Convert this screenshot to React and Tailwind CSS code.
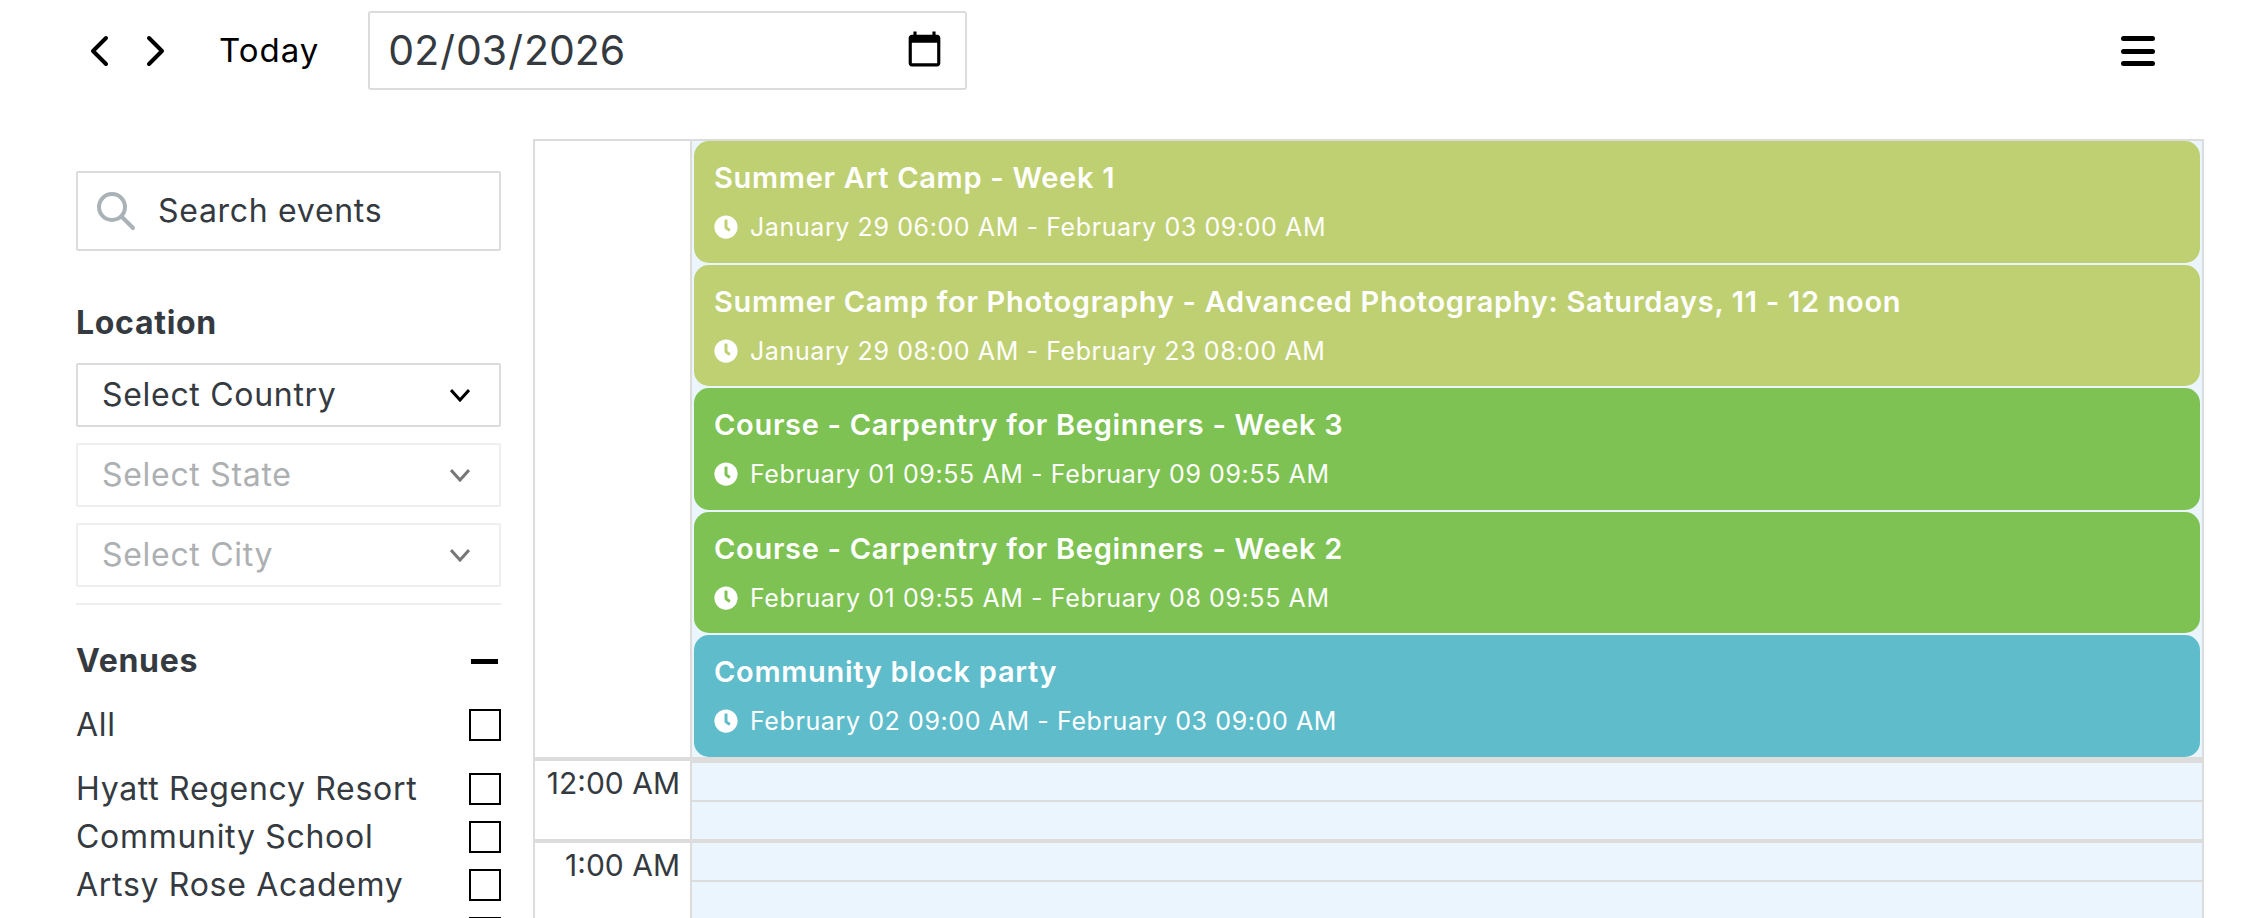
import React from "react";
import { FaClock } from "react-icons/fa";

const events = [
  { title: "Summer Art Camp - Week 1", time: "January 29 06:00 AM - February 03 09:00 AM", color: "bg-[#bfd073]" },
  { title: "Summer Camp for Photography - Advanced Photography: Saturdays, 11 - 12 noon", time: "January 29 08:00 AM - February 23 08:00 AM", color: "bg-[#bfd073]" },
  { title: "Course - Carpentry for Beginners - Week 3", time: "February 01 09:55 AM - February 09 09:55 AM", color: "bg-[#7dc253]" },
  { title: "Course - Carpentry for Beginners - Week 2", time: "February 01 09:55 AM - February 08 09:55 AM", color: "bg-[#7dc253]" },
  { title: "Community block party", time: "February 02 09:00 AM - February 03 09:00 AM", color: "bg-[#5fbccb]" },
];

const venues = ["Hyatt Regency Resort", "Community School", "Artsy Rose Academy"];

function Chevron({ dir }) {
  return (
    <svg width="20" height="32" viewBox="0 0 20 32" fill="none" stroke="#000" strokeWidth="4" strokeLinecap="round" strokeLinejoin="round">
      <path d={dir === "left" ? "M17 3 L4 16 L17 29" : "M3 3 L16 16 L3 29"} />
    </svg>
  );
}

function SelectBox({ label, disabled }) {
  return (
    <div className={`h-16 flex items-center justify-between pl-[24px] pr-[29px] border-2 rounded-[2px] ${disabled ? "border-[#eeeeee] text-[#adb0b2]" : "border-[#dcdcdc] text-[#343a40]"}`}>
      <span className="text-[32px] tracking-[0.7px]">{label}</span>
      <svg width="20" height="14" viewBox="0 0 20 14" fill="none" stroke={disabled ? "#777" : "#000"} strokeWidth="3">
        <path d="M1 2 L10 12 L19 2" />
      </svg>
    </div>
  );
}

function Check() {
  return <span className="w-8 h-8 shrink-0 border-2 border-black bg-white" />;
}

export default function App() {
  return (
    <div className="h-[918px] overflow-hidden bg-white text-[#343a40] font-['Inter','Liberation_Sans',sans-serif]">
      {/* Toolbar */}
      <div className="h-[139px] flex items-start pt-[11px] pl-[89px] pr-[95px]">
        <div className="h-[79px] flex items-center gap-[37px]">
          <Chevron dir="left" />
          <Chevron dir="right" />
        </div>
        <span className="h-[79px] ml-[53px] flex items-center text-[33px] tracking-[1px] text-black">Today</span>
        <input
          type="date"
          defaultValue="2026-02-03"
          className="ml-[49px] w-[599px] h-[79px] pl-[17px] pr-[18px] border-2 border-[#dcdcdc] rounded-[3px] text-[41px] text-[#343a40]"
        />
        <div className="ml-auto mt-[25px] w-[34px] flex flex-col gap-[7.5px]">
          <span className="h-[5px] rounded-full bg-black" />
          <span className="h-[5px] rounded-full bg-black" />
          <span className="h-[5px] rounded-full bg-black" />
        </div>
      </div>

      <div className="flex pl-[76px] pr-[46px]">
        {/* Filters */}
        <aside className="w-[425px] shrink-0 pt-8 mr-8">
          <div className="h-20 flex items-center pl-[18px] border-2 border-[#dcdcdc] rounded-[2px]">
            <svg width="40" height="40" viewBox="0 0 40 40" fill="none" stroke="#a9b2b7" strokeWidth="4" strokeLinecap="round">
              <circle cx="16" cy="16" r="13" />
              <path d="M25.5 25.5 L37 37" />
            </svg>
            <input placeholder="Search events" className="ml-[22px] min-w-0 flex-1 outline-none text-[32px] tracking-[0.7px] placeholder:text-[#343a40]" />
          </div>

          <h3 className="mt-[56px] h-[32px] flex items-center text-[32px] tracking-[0.7px] font-bold">Location</h3>
          <div className="mt-6 flex flex-col gap-4">
            <SelectBox label="Select Country" />
            <SelectBox label="Select State" disabled />
            <SelectBox label="Select City" disabled />
          </div>
          <div className="mt-4 h-[2px] bg-[#eeeeee]" />

          <div className="mt-10 h-8 flex items-center justify-between">
            <h3 className="text-[32px] tracking-[0.7px] font-bold">Venues</h3>
            <span className="w-[27px] h-[5px] mr-[3px] bg-black" />
          </div>
          <div className="mt-8 h-8 flex items-center justify-between text-[32px] tracking-[0.7px]">
            <span>All</span>
            <Check />
          </div>
          <div className="mt-8 flex flex-col gap-4 text-[32px] tracking-[0.7px]">
            {venues.map((v) => (
              <div key={v} className="h-8 flex items-center justify-between">
                <span>{v}</span>
                <Check />
              </div>
            ))}
            <div className="h-8 flex justify-end"><Check /></div>
          </div>
        </aside>

        {/* Day view */}
        <div className="flex-1 border-x-2 border-t-2 border-[#dcdcdc]">
          <div className="flex h-[616px]">
            <div className="w-[157px] shrink-0 border-r-2 border-[#dcdcdc]" />
            <div className="flex-1 bg-[#eaf5fe] flex flex-col gap-[2px] px-[2px]">
              {events.map((e) => (
                <div key={e.title} className={`h-[121.5px] rounded-[15px] pl-5 pt-[19px] text-white ${e.color}`}>
                  <div className="text-[29px] tracking-[0.7px] leading-[36px] font-semibold">{e.title}</div>
                  <div className="mt-[15px] flex items-center text-[25px] tracking-[0.6px] leading-[32px]">
                    <FaClock className="w-6 h-6 mr-3 shrink-0" />
                    {e.time}
                  </div>
                </div>
              ))}
            </div>
          </div>
          {["12:00 AM", "1:00 AM"].map((t, i) => (
            <div key={t} className="flex h-[82px] border-t-4 border-[#dcdcdc]">
              <div className="w-[157px] shrink-0 border-r-2 border-[#dcdcdc] pr-[10px] text-right text-[30px] leading-[44px]">{t}</div>
              <div className="flex-1 bg-[#eaf5fe] flex flex-col">
                <div className={i === 0 ? "h-[41px] border-t-2 border-b-2 border-[#dcdcdc]" : "h-[39px] border-b-2 border-[#dcdcdc]"} />
              </div>
            </div>
          ))}
        </div>
      </div>
    </div>
  );
}
